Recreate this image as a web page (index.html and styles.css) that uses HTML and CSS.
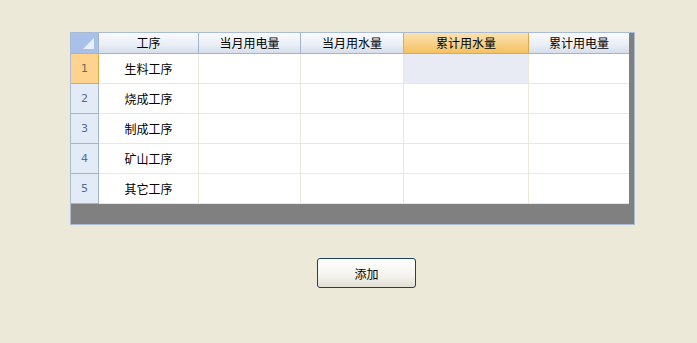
FILE: index.html
```html
<!DOCTYPE html>
<html>
<head>
<meta charset="utf-8">
<link rel="stylesheet" href="styles.css">
</head>
<body>
<div class="page">
  <div class="grid">
    <div class="sheet">
      <div class="hd corner"><span class="tri"></span></div>
      <div class="hd">工序</div>
      <div class="hd">当月用电量</div>
      <div class="hd">当月用水量</div>
      <div class="hd sel">累计用水量</div>
      <div class="hd last">累计用电量</div>

      <div class="rh rsel">1</div><div class="cell">生料工序</div><div class="cell"></div><div class="cell"></div><div class="cell cur"></div><div class="cell last"></div>
      <div class="rh">2</div><div class="cell">烧成工序</div><div class="cell"></div><div class="cell"></div><div class="cell"></div><div class="cell last"></div>
      <div class="rh">3</div><div class="cell">制成工序</div><div class="cell"></div><div class="cell"></div><div class="cell"></div><div class="cell last"></div>
      <div class="rh">4</div><div class="cell">矿山工序</div><div class="cell"></div><div class="cell"></div><div class="cell"></div><div class="cell last"></div>
      <div class="rh">5</div><div class="cell">其它工序</div><div class="cell"></div><div class="cell"></div><div class="cell"></div><div class="cell last"></div>
    </div>
  </div>
  <div class="actions">
    <button class="btn">添加</button>
  </div>
</div>
</body>
</html>
```
FILE: styles.css
```css
html, body {
  margin: 0;
  padding: 0;
  background: #ECE9D8;
  font-family: "Noto Sans CJK SC", "Liberation Sans", sans-serif;
  font-size: 12px;
  color: #000;
}
.page {
  padding: 32px 0 0 70px;
}
.grid {
  width: 563px;
  height: 191px;
  border: 1px solid #a9bcd3;
  background: #808080;
}
.sheet {
  display: grid;
  grid-template-columns: 28px 100px 102px 103px 125px 100px;
  grid-template-rows: 21px repeat(5, 30px);
  width: 558px;
  background: #fff;
}
.sheet > div {
  box-sizing: border-box;
  display: flex;
  align-items: center;
  justify-content: center;
}
.hd {
  line-height: 20px;
  background: linear-gradient(#f9fafd, #e9eef6 60%, #d6deec);
  border-right: 1px solid #9eb6ce;
  border-bottom: 1px solid #9eb6ce;
}
.hd.sel {
  background: linear-gradient(#fbe2b1, #f8d28c 50%, #f3c15f);
  border-right-color: #e3a64a;
  border-bottom-color: #e3a64a;
}
.hd.corner {
  background: #a9c1e8;
  position: relative;
}
.tri {
  position: absolute;
  right: 4px;
  bottom: 4px;
  width: 0;
  height: 0;
  border-left: 11px solid transparent;
  border-bottom: 11px solid #e9eff9;
}
.cell {
  border-right: 1px solid #ebe8da;
  border-bottom: 1px solid #ebe8da;
}
.cell.cur {
  background: #e8eaf4;
}
.sheet > .last {
  border-right: none;
}
.rh {
  background: #e3ebf7;
  color: #4e6f9e;
  font-size: 11px;
  font-family: "DejaVu Sans", sans-serif;
  border-right: 1px solid #9eb6ce;
  border-bottom: 1px solid #9eb6ce;
}
.rh.rsel {
  background: #fdd38d;
  color: #6b6a5e;
  border-bottom-color: #e3a64a;
  border-right-color: #e3a64a;
}
.actions {
  padding: 33px 0 0 247px;
}
.btn {
  width: 99px;
  height: 30px;
  border: 1px solid #1e3f6a;
  border-radius: 3px;
  background: linear-gradient(#ffffff, #f4f3ee 60%, #e2dfd3);
  font-family: "Noto Sans CJK SC", sans-serif;
  font-size: 12px;
  color: #000;
  padding: 0;
}
```
